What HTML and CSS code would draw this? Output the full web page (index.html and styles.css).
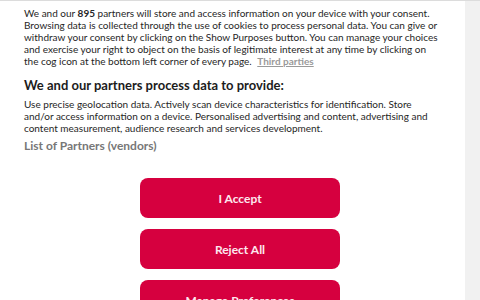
FILE: index.html
```html
<!DOCTYPE html>
<html>
<head>
<meta charset="utf-8">
<link rel="stylesheet" href="styles.css">
</head>
<body>
<div class="page">
  <div class="panel">
    <p class="intro">We and our <b>895</b> partners will store and access information on your device with your consent. Browsing data is collected through the use of cookies to process personal data. You can give or withdraw your consent by clicking on the Show Purposes button. You can manage your choices and exercise your right to object on the basis of legitimate interest at any time by clicking on the cog icon at the bottom left corner of every page. <a class="link" href="#">Third parties</a></p>
    <h2 class="heading">We and our partners process data to provide:</h2>
    <p class="purposes">Use precise geolocation data. Actively scan device characteristics for identification. Store and/or access information on a device. Personalised advertising and content, advertising and content measurement, audience research and services development.</p>
    <div class="partners">List of Partners (vendors)</div>
    <div class="buttons">
      <button class="btn">I Accept</button>
      <button class="btn">Reject All</button>
      <button class="btn">Manage Preferences</button>
    </div>
  </div>
  <div class="side"></div>
</div>
</body>
</html>
```
FILE: styles.css
```css
html, body {
  margin: 0;
  padding: 0;
  height: 300px;
  overflow: hidden;
  background: #fff;
  font-family: Lato, "Noto Sans", sans-serif;
}
.page {
  display: flex;
  height: 300px;
  border-top: 1px solid #dcdcdc;
  box-sizing: border-box;
}
.panel {
  width: 465px;
  padding: 6px 24px 0 24px;
  box-sizing: border-box;
  color: #262626;
}
.side {
  flex: 1;
  background: #f1f1f1;
}
.intro {
  margin: 0;
  font-size: 10px;
  line-height: 12px;
}
.intro b { font-weight: 700; }
.link {
  color: #9a9a9a;
  font-weight: 700;
  text-decoration: underline;
  margin-left: 3px;
}
.heading {
  margin: 10px 0 5px 0;
  font-size: 13px;
  line-height: 16px;
  font-weight: 700;
  color: #1c1c1c;
}
.purposes {
  margin: 0;
  font-size: 10px;
  line-height: 12px;
}
.partners {
  margin-top: 5px;
  font-size: 12px;
  line-height: 14px;
  font-weight: 700;
  color: #777;
}
.buttons {
  display: flex;
  flex-direction: column;
  align-items: center;
  gap: 11px;
  margin: 25px -39px 0 -24px;
}
.btn {
  width: 200px;
  height: 40px;
  border: none;
  border-radius: 8px;
  background: #d6003f;
  color: #fde8ee;
  font-family: Lato, "Noto Sans", sans-serif;
  font-size: 12px;
  font-weight: 700;
  flex-shrink: 0;
}
```
